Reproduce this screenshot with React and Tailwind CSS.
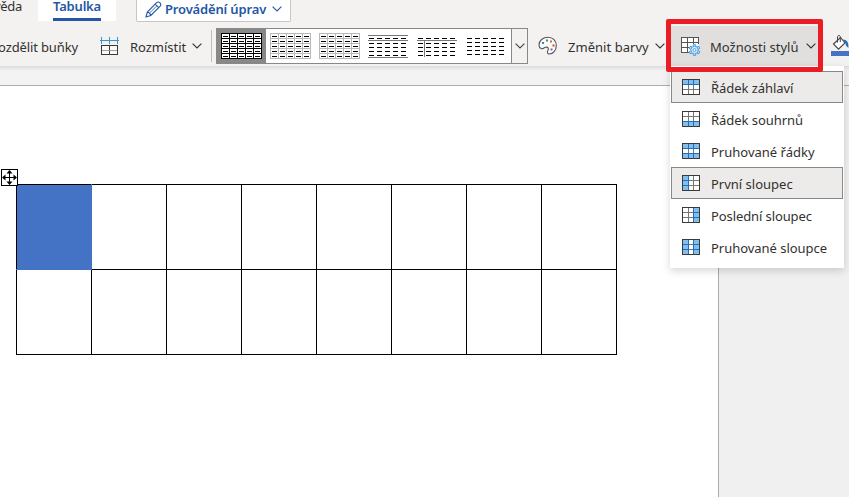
import React from "react";

const Chevron = ({ className = "text-[#444]" }) => (
  <svg width="10" height="6" viewBox="0 0 10 6" className={"shrink-0 " + className} fill="none" stroke="currentColor" strokeWidth="1.1">
    <path d="M0.6 0.6 L5 5 L9.4 0.6" />
  </svg>
);

const COLS = [0, 1, 2, 3, 4];

function GridThumb({ line }) {
  return (
    <svg width="41" height="26" shapeRendering="crispEdges" className="shrink-0">
      <rect width="41" height="26" fill="#fff" />
      {[0, 5, 10, 15, 20, 25].map((y) => <rect key={"h" + y} y={y} width="41" height="1" fill={line} />)}
      {[0, 8, 16, 24, 32, 40].map((x) => <rect key={"v" + x} x={x} width="1" height="26" fill={line} />)}
      {[3, 8, 13, 18, 23].map((y) => COLS.map((c) => <rect key={y + "-" + c} x={c * 8 + 2} y={y} width="5" height="1" fill="#000" />))}
    </svg>
  );
}

function DashThumb({ rows, hLines = [], vLine, start = 0 }) {
  return (
    <svg width="41" height="26" shapeRendering="crispEdges" className="shrink-0">
      {hLines.map((y) => <rect key={y} y={y} width="40" height="1" fill="#777" />)}
      {rows.map((y) => COLS.map((c) => <rect key={y + "-" + c} x={c * 8 + start} y={y} width="5" height="1" fill="#000" />))}
      {vLine && <rect x="7" y="7" width="1" height="17" fill="#777" />}
    </svg>
  );
}

function TableIcon({ fill = [] }) {
  return (
    <svg width="18" height="16" viewBox="0 0 18 16" className="shrink-0" shapeRendering="crispEdges">
      <rect width="18" height="16" fill="#fff" />
      {fill.map(([x, y, w, h]) => <rect key={x + "," + y} x={x} y={y} width={w} height={h} fill="#83beec" />)}
      <path d="M6.5 0V16M11.5 0V16M0 5.5H18M0 10.5H18" stroke="#797775" />
      {fill.map(([x, y, w, h]) => (
        <path
          key={"l" + x + "," + y}
          d={w > h
            ? `M6.5 ${y}V${y + h}M11.5 ${y}V${y + h}M0 ${y === 0 ? 5.5 : 10.5}H18`
            : `M${x} 5.5H${x + w}M${x} 10.5H${x + w}M${x === 0 ? 6.5 : 11.5} 0V16`}
          stroke="#1e6fbe"
        />
      ))}
      <rect x="0.5" y="0.5" width="17" height="15" fill="none" stroke="#3b3a39" />
    </svg>
  );
}

const ITEMS = [
  { label: "Řádek záhlaví", fill: [[0, 0, 18, 5]], on: true, track: "tracking-[-0.05px]" },
  { label: "Řádek souhrnů", fill: [[0, 11, 18, 5]], track: "tracking-[-0.05px]" },
  { label: "Pruhované řádky", fill: [[0, 0, 18, 5], [0, 11, 18, 5]], track: "tracking-[0px]" },
  { label: "První sloupec", fill: [[0, 0, 6, 16]], on: true, track: "tracking-[0px]" },
  { label: "Poslední sloupec", fill: [[12, 0, 6, 16]], track: "tracking-[-0.1px]" },
  { label: "Pruhované sloupce", fill: [[0, 0, 6, 16], [12, 0, 6, 16]], track: "tracking-[-0.03px]" },
];

function StyleMenu() {
  return (
    <div className="absolute left-[670px] top-[66px] z-10 h-[202px] w-[174px] bg-white pt-[5px] shadow-[0_3px_8px_rgba(0,0,0,0.16)]">
      {ITEMS.map((it) => (
        <div
          key={it.label}
          className={"ml-px flex h-8 w-[172px] items-center border pl-[10px] " + (it.on ? "border-[#8a8886] bg-[#edebe9]" : "border-transparent")}
        >
          <TableIcon fill={it.fill} />
          <span className={"ml-[11px] mt-px " + it.track}>{it.label}</span>
        </div>
      ))}
    </div>
  );
}

const Gear = () => (
  <g transform="translate(13.5 13)" stroke="#4a9cdb" fill="#e3f1fb">
    {[0, 60, 120, 180, 240, 300].map((a) => (
      <path key={a} d="M-1.4 -3.6 L-1.1 -5.4 H1.1 L1.4 -3.6" transform={`rotate(${a})`} />
    ))}
    <circle r="3.7" />
    <circle r="1.5" fill="#fff" />
  </g>
);

export default function App() {
  return (
    <div className="relative flex h-[497px] w-[849px] flex-col overflow-hidden bg-[#f3f2f1] font-['Noto_Sans','Open_Sans',sans-serif] text-[13px] leading-[18px] whitespace-nowrap text-[#323130]">
      <header className="h-[66px] shrink-0 bg-[#f3f2f1]">
        <div className="flex h-[22px] items-start">
          <div className="flex w-[38px] justify-start">
            <span className="-ml-[6px] -mt-[3px] tracking-[-0.3px]">věda</span>
          </div>
          <div className="flex h-[21px] w-[78px] flex-col items-center bg-white">
            <span className="-mt-[3px] h-[21px] font-semibold tracking-[-0.2px] text-[#2357a5]">Tabulka</span>
            <span className="h-[3px] w-[48px] shrink-0 bg-[#2357a5]" />
          </div>
          <div className="ml-5 flex h-[22px] w-[155px] items-center rounded-b-[2px] border border-t-0 border-[#c8c6c4] bg-white pl-2 text-[#2357a5]">
            <svg width="17" height="17" viewBox="0 0 17 17" fill="none" stroke="currentColor" strokeWidth="1.1" className="-mt-[3px] shrink-0">
              <path d="M1 16 L2.3 11 L11.6 1.7 Q13.3 0.3 15 1.9 Q16.5 3.5 15.2 5.1 L5.8 14.5 Z M2.3 11 Q5 11.5 5.8 14.5 M10.2 3.2 L13.6 6.6" />
              <path d="M4.4 12.2 L11.8 4.9" strokeWidth="0.8" />
            </svg>
            <span className="ml-[3px] -mt-[3px] w-[101px] font-semibold tracking-[-0.16px]">Provádění úprav</span>
            <Chevron className="ml-[6px] -mt-[4px] text-[#2357a5]" />
          </div>
        </div>
        <div className="flex h-[44px] items-center">
          <div className="mt-[6px] flex w-[78px] shrink-0 justify-end">
            <span className="tracking-[-0.13px]">Rozdělit buňky</span>
          </div>
          <svg width="20" height="20" viewBox="0 0 20 20" className="ml-[22px] mt-[4px] shrink-0" fill="none" shapeRendering="crispEdges">
            <path d="M0 4.5H19M1.5 1V8M9.5 1V8M17.5 1V8" stroke="#3b93cf" />
            <path d="M1.5 9.5H17.5V18.5H1.5ZM9.5 9.5V18.5" fill="#fafafa" stroke="#3b3a39" />
            <path d="M2 14.5H17" stroke="#a19f9d" />
          </svg>
          <span className="ml-[10px] mt-[6px] w-[58px] shrink-0 tracking-[-0.03px]">Rozmístit</span>
          <Chevron className="ml-[4px] mt-[4px]" />
          <div className="ml-[9px] mt-[4px] h-[32px] w-px shrink-0 bg-[#c0bebc]" />
          <div className="ml-[4px] mt-[4px] flex h-[36px] w-[312px] shrink-0 items-center border border-[#888] bg-white">
            <div className="flex h-full w-[49px] shrink-0 items-center bg-[#888] pl-1 pb-px">
              <GridThumb line="#000" />
            </div>
            <div className="flex flex-1 gap-2 pl-1 pb-px">
              <GridThumb line="#b9b9b9" />
              <GridThumb line="#b9b9b9" />
              <DashThumb rows={[5, 10, 14, 18, 22]} hLines={[2, 7, 24]} start={1} />
              <DashThumb rows={[5, 10, 14, 18, 22]} hLines={[7]} vLine start={1} />
              <DashThumb rows={[5, 9, 13, 17, 21]} start={1} />
            </div>
            <div className="flex h-full w-[16px] shrink-0 items-center justify-center border-l border-[#888] bg-[#f3f2f1]">
              <Chevron />
            </div>
          </div>
          <svg width="20" height="20" viewBox="0 0 20 20" className="ml-[10px] mt-[4px] shrink-0">
            <path d="M1 9 C1 4.5 5 1.3 10 1.3 C15 1.3 18.3 5 18.3 9.7 C18.3 14.5 15 18 11.5 18 C9.2 18 9 16 10 14.3 C11 12.5 10 10.7 7.6 11.3 C5.5 11.8 4.8 13.2 3.2 12.6 C1.8 12.1 1 10.8 1 9Z" fill="#fafafa" stroke="#555" strokeWidth="1.1" />
            <rect x="4" y="6" width="2" height="2" fill="#2b88d8" />
            <rect x="8" y="3.5" width="2" height="2" fill="#3a9b6c" />
            <rect x="12" y="4.5" width="2" height="2" fill="#d9673a" />
            <rect x="14.5" y="8.5" width="2" height="2" fill="#d9443a" />
            <rect x="12.5" y="12.5" width="2" height="2" fill="#8a5fb0" />
          </svg>
          <span className="ml-[10px] mt-[6px] w-[82px] shrink-0 tracking-[0.04px]">Změnit barvy</span>
          <Chevron className="ml-[5px] mt-[4px]" />
          <div className="ml-[5px] flex h-[40px] w-[151px] shrink-0 items-center self-end bg-[#e1dfdd] pl-[11px]">
            <svg width="20" height="19" viewBox="0 0 20 19" className="mt-px shrink-0">
              <path d="M0.5 0.5H17.5V15.5H0.5Z" fill="#fff" />
              <path d="M8 15.5H0.5V0.5H17.5V7M6.5 0.5V15.5M12.5 0.5V7M0.5 5.5H17.5M0.5 10.5H8" fill="none" stroke="#555" shapeRendering="crispEdges" />
              <Gear />
            </svg>
            <span className="ml-[9px] mt-[2px] w-[89px] shrink-0 tracking-[0.03px]">Možnosti stylů</span>
            <Chevron className="ml-[7px]" />
          </div>
          <svg width="20" height="22" viewBox="0 0 20 22" className="ml-[10px] mt-[2px] shrink-0">
            <path d="M2.5 10 L9.5 3.5 L14 9 L7.5 15.2 Z" fill="#fff" stroke="#444" strokeWidth="1.1" />
            <path d="M6.5 8.5V2.5Q8 0 9.3 2.5V8" fill="none" stroke="#444" />
            <path d="M12 5.5 Q18 5.5 17.5 14 Q14.5 12 14.3 9Z" fill="#1e6fbe" />
            <rect y="17" x="0" width="20" height="5" fill="#4472c4" />
          </svg>
        </div>
      </header>
      <div className="h-[19px] shrink-0 bg-[#f3f3f3] bg-linear-to-b from-[#dcdcdc] via-[#f3f3f3] via-25% to-[#f3f3f3]" />
      <main className="flex flex-1">
        <div className="w-[719px] border-t border-r border-[#ababab] bg-white pl-4 pt-[98px]">
          <table className="w-[601px] table-fixed border-collapse">
            <tbody>
              {[0, 1].map((r) => (
                <tr key={r} className="h-[85px]">
                  {[0, 1, 2, 3, 4, 5, 6, 7].map((c) => (
                    <td key={c} className={"border border-black p-0 " + (r === 0 && c === 0 ? "border-r-[#4472c4] border-b-[#4472c4] bg-[#4472c4]" : "")} />
                  ))}
                </tr>
              ))}
            </tbody>
          </table>
        </div>
        <div className="flex-1 border-t border-[#ababab] bg-[#f0f0f0]" />
      </main>
      <svg width="17" height="17" viewBox="0 0 17 17" className="absolute left-[1px] top-[169px]">
        <rect x="0.5" y="0.5" width="16" height="16" fill="#fff" stroke="#000" />
        <path d="M8.5 2V15M2 8.5H15" stroke="#000" />
        <path d="M8.5 1L11.5 4.5H5.5ZM8.5 16L11.5 12.5H5.5ZM1 8.5L4.5 5.5V11.5ZM16 8.5L12.5 5.5V11.5Z" fill="#000" />
      </svg>
      <StyleMenu />
      <div className="absolute left-[666px] top-[19px] z-20 h-[53px] w-[157px] rounded-[2px] border-[5px] border-[#ea1c24]" />
    </div>
  );
}
